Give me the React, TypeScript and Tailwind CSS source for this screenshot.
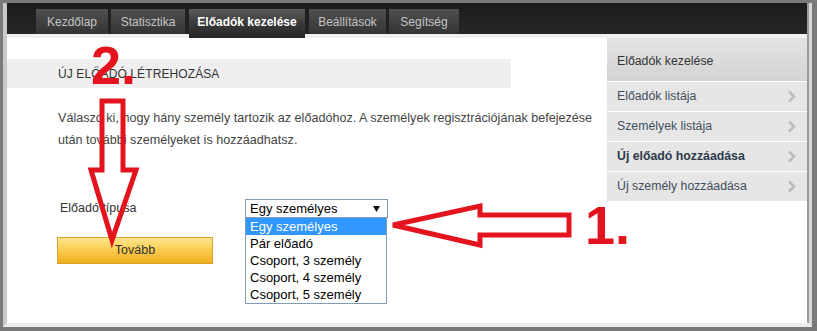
import React from "react";

const tabs = [
  { label: "Kezdőlap", w: "w-[72px]", active: false },
  { label: "Statisztika", w: "w-[74px]", active: false },
  { label: "Előadók kezelése", w: "w-[116px]", active: true },
  { label: "Beállítások", w: "w-[77px]", active: false },
  { label: "Segítség", w: "w-[70px]", active: false },
];

const sideItems = [
  { label: "Előadók listája", bold: false },
  { label: "Személyek listája", bold: false },
  { label: "Új előadó hozzáadása", bold: true },
  { label: "Új személy hozzáadása", bold: false },
];

const options = [
  "Egy személyes",
  "Pár előadó",
  "Csoport, 3 személy",
  "Csoport, 4 személy",
  "Csoport, 5 személy",
];

function Chevron() {
  return (
    <svg width="9" height="13" viewBox="0 0 9 13" className="shrink-0">
      <polyline points="2,1.5 7,6.5 2,11.5" fill="none" stroke="#bdbdbd" strokeWidth="2.6" />
    </svg>
  );
}

export default function App() {
  return (
    <div
      className="relative w-[817px] h-[331px] overflow-hidden bg-[#7a7a7a] border-[#7a7a7a] border-t-[3px] border-l-[3px] border-r-[5px] border-b-[4px] text-[12px] text-[#333]"
      style={{ fontFamily: '"Liberation Sans", Arial, sans-serif' }}
    >
      <div className="h-full border-l-[4px] border-l-[#c9c9c9] border-r-[3px] border-r-[#d9d9d9] border-b-[4px] border-b-[#ededed] bg-white">
        <div className="h-full border-r-[2px] border-r-[#9a9a9a] flex flex-col">
          {/* nav */}
          <div className="h-[31px] shrink-0 bg-gradient-to-b from-[#1c1c1c] to-[#262626] flex items-end pl-[29px] gap-[3px] relative z-10">
            {tabs.map((t) => (
              <div
                key={t.label}
                className={
                  t.active
                    ? `${t.w} h-[29px] mb-[-4px] mx-[1px] bg-gradient-to-b from-[#5c5c5c] via-[#3a3a3a] to-[#262626] text-white font-bold text-[12px] flex items-center justify-center pb-[4px]`
                    : `${t.w} h-[25px] bg-gradient-to-b from-[#505050] to-[#343434] text-[#c4c4c4] text-[12px] flex items-center justify-center`
                }
              >
                {t.label}
              </div>
            ))}
          </div>
          <div className="h-[4px] shrink-0 bg-[#efefef]" />
          {/* body */}
          <div className="flex flex-1">
            {/* main */}
            <div className="w-[600px] shrink-0 pt-[21px]">
              <div className="w-[504px] h-[29px] bg-[#efefef] flex items-center pl-[51px] text-[12px] text-[#333] tracking-[0.1px]">
                ÚJ ELŐADÓ LÉTREHOZÁSA
              </div>
              <p className="mt-[19px] ml-[51px] w-[540px] leading-[22px] text-[#444] text-[12.6px]">
                Válaszd ki, hogy hány személy tartozik az előadóhoz. A személyek regisztrációjának befejezése után további személyeket is hozzáadhatsz.
              </p>
              <div className="mt-[48px] ml-[53px] flex items-center">
                <div className="w-[185px] text-[#333] text-[12.5px]">Előadó típusa</div>
                <div className="relative">
                  <div className="w-[143px] h-[19px] border border-[#7f9db9] bg-white flex items-center justify-between pl-[4px] pr-[7px] text-[13px] text-black">
                    <span>Egy személyes</span>
                    <svg width="7" height="6" viewBox="0 0 7 6">
                      <polygon points="0,0 7,0 3.5,6" fill="#111" />
                    </svg>
                  </div>
                  <div className="absolute left-0 top-[19px] w-[142px] border border-[#7f9db9] border-t-0 bg-white text-[13px] text-black z-10">
                    {options.map((o, i) => (
                      <div
                        key={o}
                        className={
                          i === 0
                            ? "h-[17px] leading-[17px] pl-[4px] bg-[#3297fd] text-white"
                            : "h-[17px] leading-[17px] pl-[4px]"
                        }
                      >
                        {o}
                      </div>
                    ))}
                  </div>
                </div>
              </div>
              <button className="mt-[19px] ml-[50px] w-[156px] h-[27px] border border-[#d6a22c] bg-gradient-to-b from-[#fde68c] via-[#f9cb4c] to-[#f2ae1e] text-[#333] text-[12.5px] flex items-center justify-center">
                Tovább
              </button>
            </div>
            {/* sidebar */}
            <div className="w-[200px] shrink-0 flex flex-col">
              <div className="h-[43px] bg-gradient-to-b from-[#e3e3e3] to-[#d3d3d3] flex items-center pl-[10px] pt-[3px] text-[12.3px] text-[#333]">
                Előadók kezelése
              </div>
              {sideItems.map((s) => (
                <div
                  key={s.label}
                  className="h-[30px] border-t border-white bg-[#e6e6e6] flex items-center justify-between pl-[10px] pr-[11px]"
                >
                  <span className={s.bold ? "font-bold text-[#2b3a4a] text-[12.3px]" : "text-[#3f4e5e] text-[12.3px]"}>
                    {s.label}
                  </span>
                  <Chevron />
                </div>
              ))}
            </div>
          </div>
        </div>
      </div>

      {/* annotations */}
      <svg
        className="absolute left-[-3px] top-[-3px] pointer-events-none z-20"
        width="817"
        height="331"
        viewBox="0 0 817 331"
      >
        <path
          d="M102 101 L123 101 L123 170 L136 170 L112 240 L91 170 L102 170 Z"
          fill="none"
          stroke="#e3141d"
          strokeWidth="5"
          strokeLinejoin="miter"
        />
        <path
          d="M393 225 L480 206 L480 215 L569 215 L569 235 L480 235 L480 245 Z"
          fill="none"
          stroke="#e3141d"
          strokeWidth="5"
          strokeLinejoin="miter"
        />
      </svg>
      <span
        className="absolute left-[88px] top-[35px] text-[54px] leading-[54px] font-bold text-[#e3141d] z-20"
        style={{ fontFamily: '"Liberation Sans", Arial, sans-serif' }}
      >
        2.
      </span>
      <span
        className="absolute left-[582px] top-[195px] text-[54px] leading-[54px] font-bold text-[#e3141d] z-20"
        style={{ fontFamily: '"Liberation Sans", Arial, sans-serif' }}
      >
        1.
      </span>
    </div>
  );
}
